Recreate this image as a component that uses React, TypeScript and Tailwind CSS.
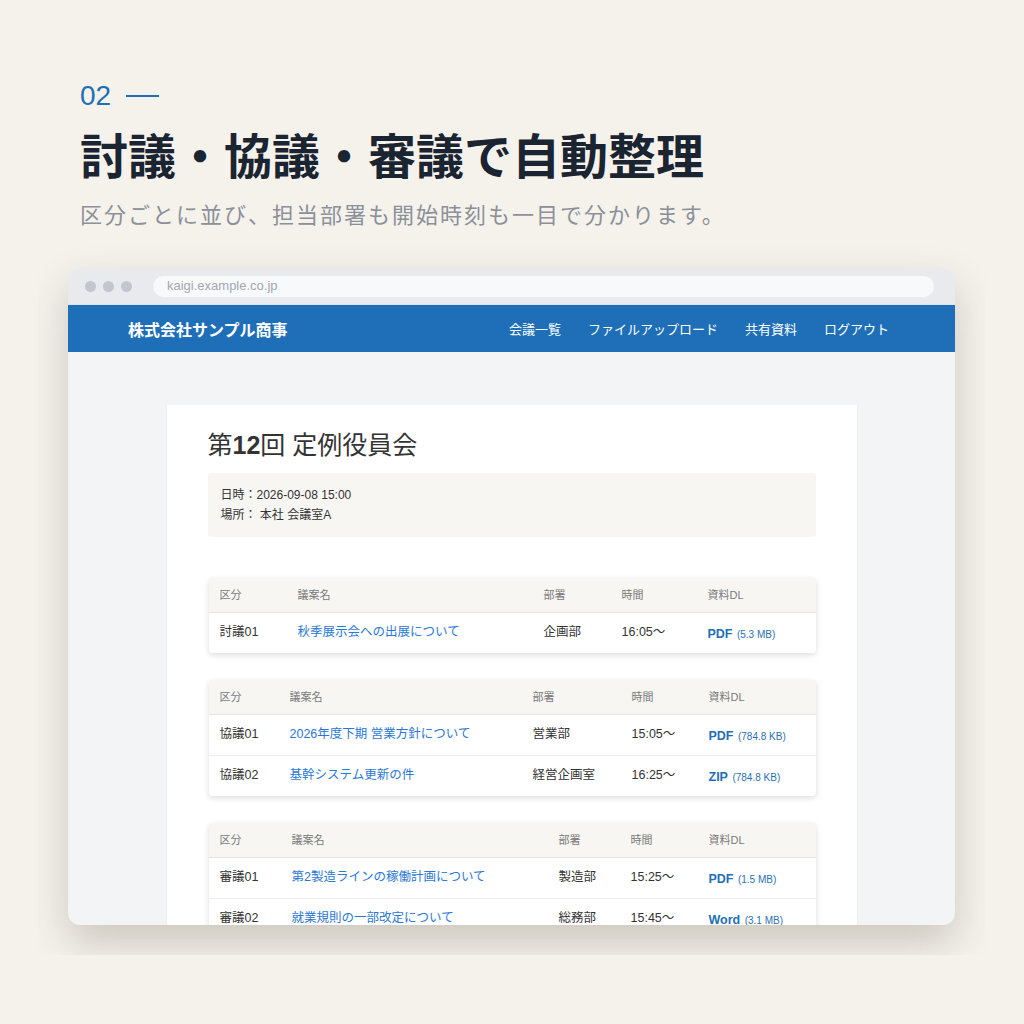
import React from "react";

type Row = { kubun: string; title: string; dept: string; time: string; type: string; size: string };

const tables: { widths: string[]; rows: Row[] }[] = [
  {
    widths: ["w-[78px]", "w-[246px]", "w-[78px]", "w-[86px]", ""],
    rows: [{ kubun: "討議01", title: "秋季展示会への出展について", dept: "企画部", time: "16:05〜", type: "PDF", size: "(5.3 MB)" }],
  },
  {
    widths: ["w-[70px]", "w-[243px]", "w-[99px]", "w-[77px]", ""],
    rows: [
      { kubun: "協議01", title: "2026年度下期 営業方針について", dept: "営業部", time: "15:05〜", type: "PDF", size: "(784.8 KB)" },
      { kubun: "協議02", title: "基幹システム更新の件", dept: "経営企画室", time: "16:25〜", type: "ZIP", size: "(784.8 KB)" },
    ],
  },
  {
    widths: ["w-[72px]", "w-[267px]", "w-[72px]", "w-[78px]", ""],
    rows: [
      { kubun: "審議01", title: "第2製造ラインの稼働計画について", dept: "製造部", time: "15:25〜", type: "PDF", size: "(1.5 MB)" },
      { kubun: "審議02", title: "就業規則の一部改定について", dept: "総務部", time: "15:45〜", type: "Word", size: "(3.1 MB)" },
    ],
  },
];

const heads = ["区分", "議案名", "部署", "時間", "資料DL"];

const AgendaTable = ({ widths, rows }: { widths: string[]; rows: Row[] }) => (
  <div className="rounded-[4px] bg-white shadow-[0_2px_6px_rgba(0,0,0,0.14)]">
    <table className="w-full border-collapse text-left">
      <thead>
        <tr className="h-[34px] bg-[#f7f6f3] border-b border-[#e6e4df]">
          {heads.map((h, i) => (
            <th key={h} className={`${widths[i]} pl-[11px] text-[11px] font-normal text-[#7a7a7a]`}>
              {h}
            </th>
          ))}
        </tr>
      </thead>
      <tbody>
        {rows.map((r, i) => (
          <tr key={r.kubun} className={`h-[41px] ${i > 0 ? "border-t border-[#f0efec]" : ""}`}>
            <td className="pl-[11px] text-[12.5px] text-[#333]">{r.kubun}</td>
            <td className="pl-[11px] text-[12.5px] text-[#2a78d6]">{r.title}</td>
            <td className="pl-[11px] text-[12.5px] text-[#333]">{r.dept}</td>
            <td className="pl-[11px] text-[12.5px] text-[#333]">{r.time}</td>
            <td className="pl-[11px] whitespace-nowrap">
              <span className="text-[12.5px] font-bold text-[#1e6fb8]">{r.type}</span>{" "}
              <span className="text-[10px] text-[#2a6fb5]">{r.size}</span>
            </td>
          </tr>
        ))}
      </tbody>
    </table>
  </div>
);

export default function App() {
  return (
    <div
      className="w-[1024px] h-[1024px] bg-[#f5f2ec] overflow-hidden"
      style={{ fontFamily: '"Liberation Sans", "Noto Sans CJK JP", sans-serif' }}
    >
      <div className="pl-[80px] pt-[80px]">
        <div className="flex items-center gap-[15px] h-[32px] text-[28px] text-[#1f6fb5] font-medium">
          <span>02</span>
          <span className="block w-[33px] h-[2px] bg-[#1f6fb5]" />
        </div>
        <h1
          className="mt-[11px] text-[48px] leading-[60px] font-bold text-[#1b2431]"
          style={{ fontFamily: '"Noto Sans CJK JP", sans-serif' }}
        >
          討議・協議・審議で自動整理
        </h1>
        <p
          className="mt-[15px] text-[22px] leading-[30px] text-[#8b9099] tracking-[2px]"
          style={{ fontFamily: '"Noto Sans CJK JP", sans-serif' }}
        >
          区分ごとに並び、担当部署も開始時刻も一目で分かります。
        </p>
      </div>

      <div className="mt-[10px] ml-[38px] w-[947px] h-[717px] overflow-hidden p-[30px]">
        <div className="w-[887px] h-[657px] rounded-[12px] overflow-hidden bg-[#f3f4f6] shadow-[0_18px_40px_rgba(60,50,30,0.22)] flex flex-col">
          <div className="shrink-0 h-[37px] bg-[#e8eaee] flex items-center pl-[17px] pr-[21px] border-b border-[#dfe5ee]">
            <div className="flex gap-[7px]">
              <span className="w-[11px] h-[11px] rounded-full bg-[#c2c6ce]" />
              <span className="w-[11px] h-[11px] rounded-full bg-[#c2c6ce]" />
              <span className="w-[11px] h-[11px] rounded-full bg-[#c2c6ce]" />
            </div>
            <div className="ml-[21px] flex-1 h-[21px] rounded-full bg-[#f8f9fb] flex items-center pl-[14px] text-[13px] text-[#a3a7ae]">
              kaigi.example.co.jp
            </div>
          </div>
          <div className="shrink-0 h-[47px] bg-[#1e6fb8] flex items-center justify-between pl-[60px] pr-[66px] text-white">
            <span className="text-[16px] font-bold" style={{ fontFamily: '"Noto Sans CJK JP", sans-serif' }}>
              株式会社サンプル商事
            </span>
            <nav className="flex gap-[27px] text-[13px]" style={{ fontFamily: '"Noto Sans CJK JP", sans-serif' }}>
              <span>会議一覧</span>
              <span>ファイルアップロード</span>
              <span>共有資料</span>
              <span>ログアウト</span>
            </nav>
          </div>
          <div className="flex-1 min-h-0 overflow-hidden pt-[53px] flex justify-center">
            <div className="w-[690px] self-start bg-white px-[41px] pt-[24px] pb-[40px] shadow-[0_1px_3px_rgba(0,0,0,0.06)]">
              <h2 className="text-[25px] leading-[32px] text-[#333]">
                第<span className="font-bold">12</span>回 定例役員会
              </h2>
              <div className="mt-[12px] h-[64px] rounded-[4px] bg-[#f7f6f3] px-[13px] pt-[12px] text-[12px] leading-[20px] text-[#333]">
                <div>日時：2026-09-08 15:00</div>
                <div>場所： 本社 会議室A</div>
              </div>
              <div className="mt-[41px] flex flex-col gap-[27px] pl-px">
                {tables.map((t, i) => (
                  <AgendaTable key={i} widths={t.widths} rows={t.rows} />
                ))}
              </div>
            </div>
          </div>
        </div>
      </div>
    </div>
  );
}
